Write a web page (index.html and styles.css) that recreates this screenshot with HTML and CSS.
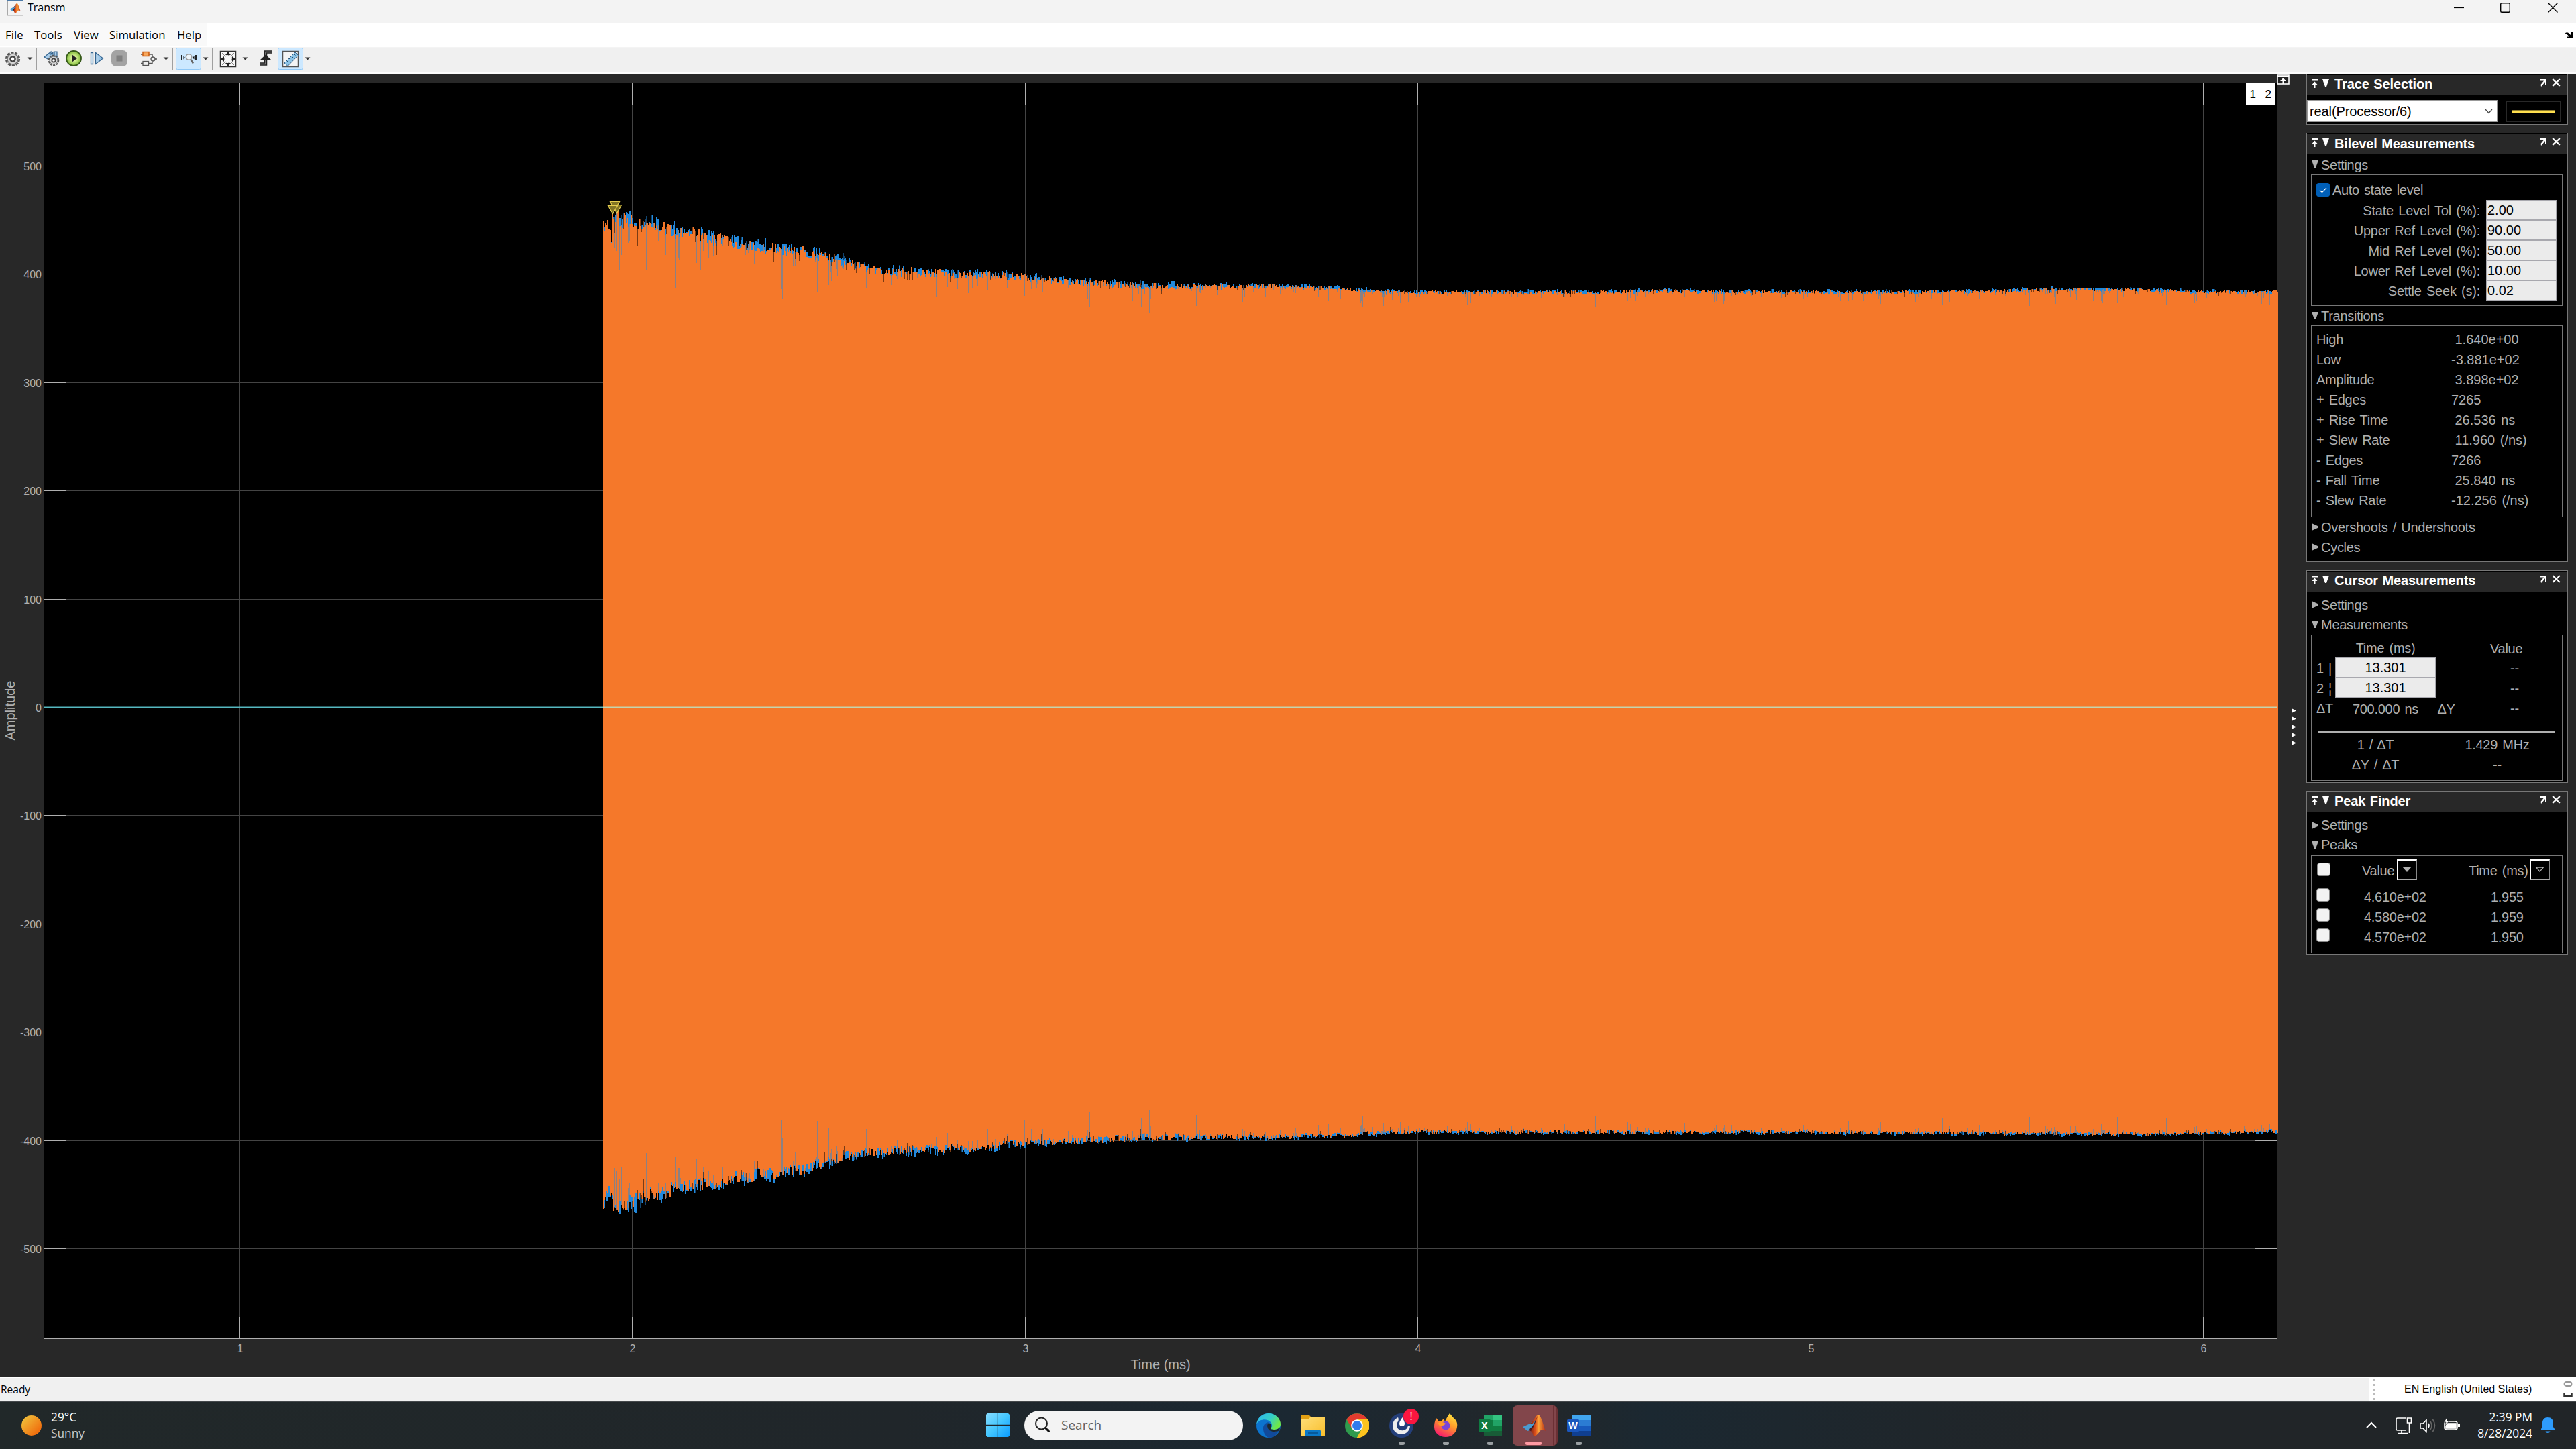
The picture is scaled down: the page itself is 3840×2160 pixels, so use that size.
FILE: index.html
```html
<!DOCTYPE html>
<html lang="en">
<head>
<meta charset="utf-8">
<title>Transm</title>
<link rel="stylesheet" href="styles.css">
</head>
<body>
<svg width="0" height="0" class="defs">
  <defs>
    <symbol id="pin" viewBox="0 0 9 13"><path d="M0 0h9v2.5H0zM4.500 3.500L8.500 8H5.500v5h-2V8H.5z" fill="#fff"/></symbol>
    <symbol id="undock" viewBox="0 0 10 11"><path d="M1 0h9v9H8V4L3.500 9.500 2 11 1.500 8 6 2.500H1z" fill="#fff"/></symbol>
    <symbol id="close" viewBox="0 0 13 12"><path d="M1.200 1l10.600 10M11.800 1L1.200 11" stroke="#fff" stroke-width="2.300"/></symbol>
    <symbol id="down" viewBox="0 0 10 11"><path d="M0 0h10L6 11H4z" fill="currentColor"/></symbol>
    <symbol id="right" viewBox="0 0 10 11"><path d="M0 0l10 4.500v2L0 11z" fill="currentColor"/></symbol>
    <linearGradient id="sun" x2="1" y2="1"><stop offset=".1" stop-color="#f0c03a"/><stop offset=".8" stop-color="#f0700f"/></linearGradient>
    <linearGradient id="win" x2="1" y2="1"><stop stop-color="#86dcff"/><stop offset=".5" stop-color="#43c6ff"/><stop offset="1" stop-color="#0a9bff"/></linearGradient>
    <linearGradient id="edgeTop" x2="1" y2=".5"><stop stop-color="#2fb4f0"/><stop offset=".6" stop-color="#35cfc5"/><stop offset="1" stop-color="#6fe847"/></linearGradient>
    <linearGradient id="fold" x2="1" y2="1"><stop stop-color="#ffe07a"/><stop offset="1" stop-color="#f9bd2b"/></linearGradient>
    <linearGradient id="fox" x1=".8" x2=".3" y2="1"><stop stop-color="#ffe93f"/><stop offset=".45" stop-color="#ff9a2a"/><stop offset="1" stop-color="#f8166e"/></linearGradient>
    <linearGradient id="matl" x2="1" y2="0"><stop stop-color="#7a1f12"/><stop offset=".35" stop-color="#e0521c"/><stop offset=".55" stop-color="#fca53a"/><stop offset="1" stop-color="#b52a14"/></linearGradient>
    <radialGradient id="play"><stop offset=".3" stop-color="#dcf59a"/><stop offset="1" stop-color="#7db935"/></radialGradient>
    <linearGradient id="step" x2="1"><stop stop-color="#e6f3fc"/><stop offset="1" stop-color="#7db3dd"/></linearGradient>
    <symbol id="matlab" viewBox="0 0 34 32">
      <path d="M0 18l11-5 5-5 3 5-8 10-4 1z" fill="#4b9bd1"/>
      <path d="M11 13C16 10 19 1 23 0c4 0 8 16 11 24-4-2-7-2-9 1-3 4-6 7-9 7-1-5-3-8-5-8 5-6 8-12 9-18l-6 8z" fill="url(#matl)"/>
      <path d="M23 0c-2 4-4 14-11 24-3-1-2-2-1-4 5-3 8-12 12-20z" fill="#4a1a20"/>
    </symbol>
    <symbol id="gear" viewBox="0 0 24 24">
      <circle cx="12" cy="12" r="9.800" fill="none" stroke="#555" stroke-width="2.600" stroke-dasharray="4.400 1.750"/>
      <circle cx="12" cy="12" r="8" fill="#d4d4d4" stroke="#666" stroke-width="1.300"/>
      <circle cx="12" cy="12" r="3.600" fill="#fff" stroke="#444" stroke-width="2.400"/>
    </symbol>
  </defs>
</svg>

<header class="titlebar">
  <svg class="app-icon" viewBox="0 0 24 24"><rect x=".5" y="-5" width="23" height="28" fill="#f3f3f3" stroke="#a9a9a9"/><path d="M0 0h24v2H0z" fill="#4c7aa8"/><use href="#matlab" x="3" y="5" width="17" height="15"/></svg>
  <span class="title">Transm</span>
  <svg class="win-buttons" viewBox="0 0 160 16"><path d="M0 8.500h15" stroke="#000" stroke-width="1.200"/><rect x="69.700" y="1.700" width="13.600" height="13.600" rx="1.500" fill="none" stroke="#000" stroke-width="1.400"/><path d="M140.500 1.500l14 14M154.500 1.500l-14 14" stroke="#000" stroke-width="1.300"/></svg>
</header>

<nav class="menubar">
  <div class="menus"><span class="m-file">File</span><span class="m-tools">Tools</span><span class="m-view">View</span><span class="m-sim">Simulation</span><span class="m-help">Help</span></div>
  <svg class="dock" viewBox="0 0 12 10"><path d="M0 3.500L2 1.500l3 0 4 3.500V1h3v9H4V7.500h3L3.500 4z" fill="#000"/></svg>
</nav>

<svg class="toolbar" width="3840" height="42" viewBox="0 68 3840 42">
  <path d="M0 68.500h3840M0 107.500h3840" stroke="#a0a0a0"/><path d="M0 69.500h3840M0 109h3840" stroke="#fff" stroke-width="1.600"/>
  <path d="M54.500 72v33M198.500 72v33M257.500 72v33M316.500 72v33M375.500 72v33" stroke="#a0a0a0"/>
  <path d="M40.500 85.500h8l-4 4zM243.500 85.500h8l-4 4zM302.500 85.500h8l-4 4zM361.500 85.500h8l-4 4zM454.500 85.500h8l-4 4z" fill="#333"/>
  <use href="#gear" x="7" y="76" width="24" height="24"/>
  <path d="M66 85l10-8v4l3-3v10l-3-2v5zM81 77h4v12h-4z" fill="#a9cdea" stroke="#356590" stroke-width="1.200"/>
  <use href="#gear" x="71" y="81" width="18" height="18"/>
  <circle cx="110" cy="87" r="11" fill="url(#play)" stroke="#375a1a" stroke-width="1.800"/><path d="M107 81l8 6-8 6z" fill="#222"/>
  <path d="M135.500 78.500h3v17h-3zM142.500 78.500l11 8.500-11 8.500z" fill="url(#step)" stroke="#356590" stroke-width="1.300"/>
  <rect x="166" y="75" width="24" height="24" rx="7" fill="#a3a3a3"/><rect x="173.500" y="82.500" width="9" height="9" fill="#808080"/>
  <path d="M210 81h4M221 81h6v5M210 94.500h4M221 94.500h6v-3M231 88h3" fill="none" stroke="#555" stroke-width="1.400"/>
  <rect x="213" y="77.500" width="9" height="6" fill="#f9a85c" stroke="#c75a10" stroke-width="1.500"/><rect x="213" y="91.500" width="8.500" height="6" fill="#eee" stroke="#555" stroke-width="1.300"/><circle cx="228" cy="88" r="3" fill="#eee" stroke="#555" stroke-width="1.300"/>
  <rect x="262.500" y="71.500" width="37" height="32" rx="2" fill="#cce8ff" stroke="#90c8f6"/>
  <path d="M271 82v8M292 82v8" stroke="#111" stroke-width="1.800"/><path d="M273.500 83.500v5l2.500-2.500zM289.500 83.500v5l-2.500-2.500z" fill="#111"/><circle cx="281.500" cy="85" r="4.200" fill="#eef6fc" stroke="#999" stroke-width="1.600"/><path d="M284.500 89l3.500 5.500" stroke="#666" stroke-width="2.400"/>
  <rect x="328.500" y="76.500" width="23" height="23" fill="#f7f7f7" stroke="#333" stroke-width="1.500"/>
  <path d="M340 77l4 5h-8zM340 99l4-5h-8zM329 88l5-4v8zM351 88l-5-4v8z" fill="#222"/><circle cx="340" cy="88" r="5.500" fill="none" stroke="#999" stroke-dasharray="3 2"/><path d="M331 79l4 4M349 79l-4 4M331 97l4-4M349 97l-4-4" stroke="#888"/>
  <path d="M387 95.500h9v-18h10" fill="none" stroke="#222" stroke-width="4.500"/><path d="M388 95.500h8v-18h9" fill="none" stroke="#999" stroke-width="1.300"/><path d="M387.500 89.500l8.500-8 8.500 8z" fill="#222"/>
  <rect x="414.500" y="71.500" width="37" height="32" rx="2" fill="#cce8ff" stroke="#90c8f6"/>
  <rect x="421.500" y="76.500" width="23" height="23" fill="#f4f4f4" stroke="#555" stroke-width="1.500"/><path d="M424 94l16-16 4.500 4.500-15.500 16z" fill="#8cc3e6" stroke="#38648a"/><path d="M427.500 90.500l2.500 2.500M431 87l2.500 2.500M434.500 83.500l2.500 2.500M438 80l2.500 2.500" stroke="#25506f"/>
</svg>

<main class="scope">
  <svg id="plot" class="plot" width="3438" height="1942" viewBox="0 110 3438 1942">
    <rect x="65" y="123" width="3330" height="1873" fill="#000"/>
    <g id="grid"></g>
    <g id="wave" shape-rendering="crispEdges"></g>
    <rect x="65.500" y="123.500" width="3329" height="1872" fill="none" stroke="#afafaf"/>
    <path d="M66 1054.500h833" stroke="#55b8c0" stroke-width="2"/><path d="M899 1054.500h2495" stroke="#c3d4ae" stroke-width="2"/>
    <g fill="#827524" stroke="#e6cf50" stroke-width="1.200"><path d="M909.500 300.500h14l-7 12z"/><path d="M912.500 305.500h14l-7 12z"/><path d="M906.500 306.500h14l-7 12z"/></g>
    <g id="labels" class="tick"></g>
    <text class="axis" x="1730" y="2041" text-anchor="middle">Time (ms)</text>
    <text class="axis" transform="translate(22 1059) rotate(-90)" text-anchor="middle">Amplitude</text>
    <path d="M3348 123h22v33h-22zM3371 123h21v33h-21z" fill="#fff"/>
    <path d="M3370.500 123v33" stroke="#222"/>
    <text class="legend" x="3353.500" y="146">1</text><text class="legend" x="3376.500" y="146">2</text>
    <rect x="3395" y="112" width="17" height="13" fill="#222" stroke="#fff" stroke-width="1.600"/><path d="M3395 114.500h17" stroke="#fff"/><path d="M3403.500 116l4.500 5h-3.500v4h-2v-4h-3.500z" fill="#fff"/>
    <path d="M3416 1056l7 3.500-7 3.500zM3416 1068l7 3.500-7 3.500zM3416 1080l7 3.500-7 3.500zM3416 1092l7 3.500-7 3.500zM3416 1104l7 3.500-7 3.500z" fill="#fff"/>
  </svg>

  <aside class="side">
    <section class="panel trace">
      <h2><svg class="i-pin"><use href="#pin"/></svg><svg class="i-tri"><use href="#down"/></svg><span>Trace Selection</span><svg class="i-un"><use href="#undock"/></svg><svg class="i-x"><use href="#close"/></svg></h2>
      <div class="trace-row"><div class="combo">real(Processor/6)<svg width="12" height="8" viewBox="0 0 12 8"><path d="M1 1l5 5.500L11 1" fill="none" stroke="#444" stroke-width="1.200"/></svg></div><div class="swatch"><i></i></div></div>
    </section>

    <section class="panel bilevel">
      <h2><svg class="i-pin"><use href="#pin"/></svg><svg class="i-tri"><use href="#down"/></svg><span>Bilevel Measurements</span><svg class="i-un"><use href="#undock"/></svg><svg class="i-x"><use href="#close"/></svg></h2>
      <div class="sec"><svg><use href="#down"/></svg>Settings</div>
      <div class="box settings">
        <div class="auto"><svg width="20" height="20" viewBox="0 0 20 20"><rect width="20" height="20" rx="3.500" fill="#005fb8"/><path d="M5 10.500l3.500 3L15 7" fill="none" stroke="#fff" stroke-width="1.200"/></svg>Auto state level</div>
        <div class="field"><span>State Level Tol (%):</span><b>2.00</b></div>
        <div class="field"><span>Upper Ref Level (%):</span><b>90.00</b></div>
        <div class="field"><span>Mid Ref Level (%):</span><b>50.00</b></div>
        <div class="field"><span>Lower Ref Level (%):</span><b>10.00</b></div>
        <div class="field"><span>Settle Seek (s):</span><b>0.02</b></div>
      </div>
      <div class="sec"><svg><use href="#down"/></svg>Transitions</div>
      <div class="box trans">
        <div class="kv"><span>High</span><span class="in">1.640e+00</span></div>
        <div class="kv"><span>Low</span><span>-3.881e+02</span></div>
        <div class="kv"><span>Amplitude</span><span class="in">3.898e+02</span></div>
        <div class="kv"><span>+ Edges</span><span>7265</span></div>
        <div class="kv"><span>+ Rise Time</span><span class="in">26.536 ns</span></div>
        <div class="kv"><span>+ Slew Rate</span><span class="in">11.960 (/ns)</span></div>
        <div class="kv"><span>- Edges</span><span>7266</span></div>
        <div class="kv"><span>- Fall Time</span><span class="in">25.840 ns</span></div>
        <div class="kv"><span>- Slew Rate</span><span>-12.256 (/ns)</span></div>
      </div>
      <div class="sec"><svg><use href="#right"/></svg>Overshoots / Undershoots</div>
      <div class="sec"><svg><use href="#right"/></svg>Cycles</div>
    </section>

    <section class="panel cursor">
      <h2><svg class="i-pin"><use href="#pin"/></svg><svg class="i-tri"><use href="#down"/></svg><span>Cursor Measurements</span><svg class="i-un"><use href="#undock"/></svg><svg class="i-x"><use href="#close"/></svg></h2>
      <div class="sec first"><svg><use href="#right"/></svg>Settings</div>
      <div class="sec"><svg><use href="#down"/></svg>Measurements</div>
      <div class="box">
        <div class="cur head"><span></span><span>Time (ms)</span><span></span><span class="vh">Value</span></div>
        <div class="cur"><span>1 |</span><b>13.301</b><span></span><span>--</span></div>
        <div class="cur"><span>2 ¦</span><b>13.301</b><span></span><span>--</span></div>
        <div class="cur"><span>ΔT</span><span class="mid">700.000 ns</span><span class="dy">ΔY</span><span>--</span></div>
        <hr>
        <div class="pair"><span>1 / ΔT</span><span>1.429 MHz</span></div>
        <div class="pair"><span>ΔY / ΔT</span><span>--</span></div>
      </div>
    </section>

    <section class="panel peak">
      <h2><svg class="i-pin"><use href="#pin"/></svg><svg class="i-tri"><use href="#down"/></svg><span>Peak Finder</span><svg class="i-un"><use href="#undock"/></svg><svg class="i-x"><use href="#close"/></svg></h2>
      <div class="sec first"><svg><use href="#right"/></svg>Settings</div>
      <div class="sec"><svg><use href="#down"/></svg>Peaks</div>
      <div class="box">
        <div class="pk pk-head"><i></i><span class="v">Value</span><em><svg width="14" height="8" viewBox="0 0 14 8"><path d="M0 0h14L7 8z" fill="#afafaf"/></svg></em><span class="t">Time (ms)</span><em><svg width="14" height="8" viewBox="0 0 14 8"><path d="M1.500 1h11L7 7.200z" fill="none" stroke="#afafaf" stroke-width="1.300"/></svg></em></div>
        <div class="pk"><i></i><span class="v">4.610e+02</span><span class="t">1.955</span></div>
        <div class="pk"><i></i><span class="v">4.580e+02</span><span class="t">1.959</span></div>
        <div class="pk"><i></i><span class="v">4.570e+02</span><span class="t">1.950</span></div>
      </div>
    </section>
  </aside>
</main>

<footer class="status">
  <span>Ready</span>
  <div class="lang"><span>EN English (United States)</span><svg width="14" height="26" viewBox="0 0 14 26"><rect x="1.500" y="2" width="11" height="6" rx="3" fill="none" stroke="#999" stroke-width="1.800"/><path d="M1.500 19v4h11v-4" fill="none" stroke="#333" stroke-width="2.500"/></svg></div>
</footer>

<div class="taskbar">
  <div class="weather"><svg width="30" height="30"><circle cx="15" cy="15" r="15" fill="url(#sun)"/></svg><div><p>29°C</p><p class="dim">Sunny</p></div></div>
  <svg class="start" width="35" height="35" viewBox="0 0 35 35" fill="url(#win)"><path d="M2 0h14.800v16.800H0V2zM18 0h15l2 2v14.800H18zM0 18h16.800v17H2l-2-2zM18 18h17v15l-2 2H18z"/></svg>
  <div class="search"><svg width="24" height="24" viewBox="0 0 24 24"><circle cx="10.500" cy="10" r="8.500" fill="none" stroke="#222" stroke-width="2"/><path d="M16.500 16.500l5 5" stroke="#111" stroke-width="3" stroke-linecap="round"/></svg>Search</div>
  <div class="apps">
    <div><svg viewBox="0 0 36 36"><circle cx="18" cy="18" r="18" fill="#0c74cf"/><path d="M0 16C2 5 10 0 18 0c11 0 18 8 18 16 0 6-5 8-10 8-3 0-5-1-5-2 3-2 3-7-1-10C15 8 5 8 0 16z" fill="url(#edgeTop)"/><path d="M10 22c0-5 3-8 8-9-4 4-3 12 6 14 4 0 7-1 9-1-3 6-8 10-15 10-5-2-8-8-8-14z" fill="#114a9b"/><path d="M18 14c-4 3-2 13 8 13 4 0 7-1 8-2l2-7c-1 4-5 6-10 6-3 0-5-1-5-2 2-2 2-6-3-8z" fill="#1d282f"/></svg></div>
    <div><svg viewBox="0 0 36 36"><path d="M0 4q0-2 2-2h10l4 4v6H0z" fill="#e2a013"/><path d="M0 8h12l3-3h20q1 0 1 1v28H0z" fill="url(#fold)"/><path d="M6 34V27q0-3 3-3h18q3 0 3 3v7z" fill="#0b78c8"/><path d="M11 29h14" stroke="#074f8d" stroke-width="1.500"/></svg></div>
    <div><svg viewBox="0 0 36 36"><circle cx="18" cy="18" r="18" fill="#2f9b4d"/><path d="M18 18L34 9A18 18 0 0 1 18 36z" fill="#fcc31e"/><path d="M10.500 22.500L18 36l7.500-13.500" fill="#2f9b4d"/><path d="M25.500 22.500L18 36A18 18 0 0 0 34 9H18z" fill="#fcc31e"/><path d="M2.500 9A18 18 0 0 1 33.500 9H18L10 22z" fill="#e23b2e"/><circle cx="18" cy="18" r="8.800" fill="#fff"/><circle cx="18" cy="18" r="7" fill="#2f7bee"/></svg></div>
    <div class="run"><svg viewBox="0 0 36 36"><circle cx="18" cy="18" r="18" fill="#243f7a"/><path d="M13 6A13 13 0 1 0 31 18h-3c-1 5-5 8-10 7-7-1-9-8-5-13 1-2 1-4 0-6z" fill="#eee"/><path d="M19.500 6c2 4 3.500 7 3.500 9a4 4 0 0 1-8 0c0-3 3-6 4.500-9z" fill="#fff"/></svg><span class="badge">!</span></div>
    <div class="run"><svg viewBox="0 0 36 36"><path d="M4 7l4 5 4-1 3-3 2 4c2-4 4-8 7-12l5 6c5 4 7 8 6 14-1 9-8 15-17 15S1 29 1 20C1 14 2 12 4 7z" fill="url(#fox)"/><circle cx="18" cy="18" r="6.500" fill="#7a45d8"/><path d="M7 14c4-2 8-1 11 1-2 3-5 3-7 4-3-1-4-3-4-5z" fill="#ff9a2a"/></svg></div>
    <div class="run"><svg viewBox="0 0 36 36"><path d="M9 2h27v8H9z" fill="#33c481"/><path d="M9 2h13.500v8H9z" fill="#21a366"/><path d="M9 10h27v8H9z" fill="#21a366"/><path d="M9 10h13.500v16H9z" fill="#107c41"/><path d="M22.500 18H36v8H22.500z" fill="#107c41"/><path d="M9 26h27v8H9z" fill="#185c37"/><rect x="1" y="9" width="18" height="18" rx="1.500" fill="#0f7b41"/><text x="10" y="23" text-anchor="middle">X</text></svg></div>
    <div class="run active"><svg viewBox="0 0 36 36"><use href="#matlab" x="1" y="2" width="34" height="32"/></svg></div>
    <div class="run"><svg viewBox="0 0 36 36"><path d="M9 2h27v8H9z" fill="#41a5ee"/><path d="M9 10h27v8H9z" fill="#2b7cd3"/><path d="M9 18h27v8H9z" fill="#185abd"/><path d="M9 26h27v8H9z" fill="#103f91"/><rect x="1" y="9" width="18" height="18" rx="1.500" fill="#1a56bd"/><text x="10" y="22.500" text-anchor="middle">W</text></svg></div>
  </div>
  <div class="tray">
    <svg width="140" height="26" viewBox="0 0 140 26" fill="none" stroke="#fff" stroke-width="1.600"><path d="M1 16l7-7 7 7" stroke-width="2"/><path d="M59 2H47q-2 0-2 2v14q0 2 2 2h13M53 20v4M48 24.500h14M61.500 2h6v7h-6zM64.500 9v15"/><path d="M81 10h4l5-5v17l-5-5h-4z"/><path d="M93 10q2 3 0 6" /><path d="M96 7q4 6 0 12M99.500 4q6 9 0 18" stroke="#666"/><rect x="117" y="7" width="19" height="12" rx="3"/><rect x="119" y="10" width="15" height="7" fill="#fff"/><path d="M137 11h3v4h-3z" fill="#fff" stroke="none"/><path d="M121 1l-5 7h3l-1 5 6-7h-3z" fill="#fff" stroke="#212629" stroke-width=".6"/></svg>
    <div class="clock"><p>2:39 PM</p><p>8/28/2024</p></div>
    <svg class="bell" width="20" height="24" viewBox="0 0 20 24"><path d="M10 0c5 0 8 3.500 8 8v6l2 3v2H0v-2l2-3V8c0-4.500 3-8 8-8zM6.500 20.500h7q-1 2.500-3.500 2.500t-3.500-2.500z" fill="#2e9bfb"/></svg>
  </div>
</div>
<script src="plot.js"></script>
</body>
</html>
```
FILE: styles.css
```css
* { box-sizing: border-box; }
body { margin: 0; width: 3840px; height: 2160px; overflow: hidden; display: flex; flex-direction: column; background: #282828; font-family: "Open Sans", "Noto Sans", sans-serif; color: #000; }
.defs { position: absolute; }
p { margin: 0; }
svg { display: block; flex: none; }

.titlebar { height: 34px; flex: none; background: #f3f3f3; display: flex; align-items: flex-start; padding-left: 11px; }
.app-icon { width: 24px; height: 24px; }
.title { font-size: 16px; line-height: 23px; margin-left: 6px; flex: 1; }
.win-buttons { width: 160px; height: 16px; margin: 3px 22px 0 0; }

.menubar { height: 34px; flex: none; background: #fff; display: flex; justify-content: space-between; }
.menus { width: 309px; background: #f9f9f9; display: flex; padding-left: 8px; font-size: 16.800px; line-height: 35px; }
.m-file { width: 43px; }
.m-tools { width: 59px; }
.m-view { width: 53px; }
.m-sim { width: 101px; }
.dock { width: 12px; height: 10px; margin: 13px 5px 0 0; }
.toolbar { background: #f0f0f0; }

.scope { height: 1942px; flex: none; display: flex; }
.plot { background: #282828; }
.tick { font: 16px "Liberation Sans", sans-serif; fill: #afafaf; }
.axis { font: 20px "Liberation Sans", sans-serif; fill: #afafaf; }
.legend { font: 17px "Liberation Sans", sans-serif; fill: #000; }

.side { width: 390px; font: 20px/30px "Liberation Sans", Arial, sans-serif; letter-spacing: -.28px; word-spacing: 2px; color: #afafaf; }
.panel { border: 1px solid #777; background: #000; padding-top: 1px; }
.trace { height: 76px; }
.bilevel { height: 640px; margin-top: 12px; }
.cursor { height: 317px; margin-top: 12px; }
.peak { height: 244px; margin-top: 12px; }
.panel h2 { margin: 0 1px 0 0; height: 30px; background: #282828; color: #fff; font-size: 20px; line-height: 27px; letter-spacing: -.1px; word-spacing: 1px; display: flex; padding-left: 7px; }
.panel h2 span { flex: 1; margin-left: 8px; }
.bilevel h2 { line-height: 28px; }
.i-pin { width: 9px; height: 13px; margin: 6px 7px 0 0; }
.i-tri { width: 10px; height: 11px; margin-top: 6px; }
.i-un { width: 10px; height: 11px; margin: 6px 8px 0 0; }
.i-x { width: 13px; height: 12px; margin: 5px 9px 0 0; }
.sec { display: flex; height: 30px; padding-left: 7px; color: #afafaf; }
.sec svg { width: 10px; height: 11px; margin: 9px 4px 0 0; }
.box { border: 1px solid #777; margin: 0 7px 0 6px; }
.panel b { font-weight: normal; background: #ebebeb; color: #000; border: 1px solid #a8a8ae; line-height: 29px; height: 30px; letter-spacing: 0; }

.trace-row { display: flex; padding-top: 7px; }
.combo { width: 284px; height: 33px; border: 1px solid #999; background: #fff; color: #000; display: flex; justify-content: space-between; align-items: center; padding: 0 6px 0 3px; letter-spacing: -.1px; }
.swatch { width: 81px; height: 31px; margin: 2px 0 0 13px; border: 1px solid #282828; display: flex; align-items: center; justify-content: center; }
.swatch i { width: 64px; height: 5px; background: #ffdf4f; border-bottom: 1px solid #8f7d2c; border-top: 1px solid #8f7d2c; }

.bilevel h2 + .sec { line-height: 32px; }
.settings { height: 196px; padding-top: 7px; }
.auto { display: flex; align-items: center; gap: 4px; padding-left: 7px; height: 30px; line-height: 34px; letter-spacing: -.35px; }
.field { display: flex; height: 30px; justify-content: flex-end; padding-right: 8px; }
.field span { line-height: 33px; margin-right: 9px; letter-spacing: -.22px; }
.field b { width: 105px; padding-left: 1px; line-height: 29px; }
.bilevel > .sec:nth-of-type(3) { height: 29px; }
.trans { height: 286px; padding-top: 5px; }
.kv { display: grid; grid-template-columns: 201px 1fr; padding-left: 7px; height: 30px; }
.kv .in { padding-left: 5.500px; }
.kv span + span { letter-spacing: 0; }

.sec.first { margin-top: 5px; }
.cursor .sec { height: 29px; }
.cursor .box { height: 218px; margin-top: 1px; padding-top: 4px; }
.cur { display: grid; grid-template-columns: 28px 150px 31px 1fr; height: 30px; padding-left: 7px; text-align: center; }
.cur.head { height: 29px; }
.cur span:first-child { text-align: left; line-height: 33px; white-space: nowrap; }
.cur span:last-child { padding-left: 67px; padding-right: 51px; white-space: nowrap; line-height: 33px; }
.cur .vh { padding-left: 50px !important; padding-right: 60px !important; line-height: 32px !important; }
.cur .mid, .cur .dy { line-height: 34px; }
.cur b { line-height: 29px; }
.cursor hr { height: 2px; border: 0; background: #afafaf; margin: 20px 11px 3px 10px; }
.pair { display: flex; height: 30px; text-align: center; }
.pair span { width: 190px; }
.pair span + span { width: 173px; }

.peak .sec { height: 29px; line-height: 29px; }
.peak .box { height: 146px; margin-top: 1px; padding-top: 5px; }
.pk { display: grid; grid-template-columns: 71px 189px 1fr; height: 30px; padding-left: 7px; line-height: 33px; }
.pk i { width: 20px; height: 20px; background: #f3f3f3; border: 1px solid #888; border-radius: 4px; margin-top: 3px; }
.pk-head { grid-template-columns: 67px 52px 107px 91px 30px; padding-left: 8px; margin-bottom: 10px; }
.pk-head i { margin-top: 5px; }
.pk-head span { white-space: nowrap; line-height: 34px; }
.pk em { width: 30px; height: 31px; border: 1px solid #aaa; border-top: 2px solid #fff; border-left: 2px solid #fff; border-right-color: #888; padding: 9px 0 0 6px; }

.status { height: 36px; flex: none; background: #f0f0f0; border-top: 1px solid #a0a0a0; box-shadow: inset 0 1px #fff; display: flex; justify-content: space-between; padding-left: 1px; font-size: 15.500px; line-height: 36px; }
.lang { width: 309px; background: #fff; margin-top: 1px; padding: 0 5px 0 53px; display: flex; justify-content: space-between; align-items: center; font: 16px "Liberation Sans", sans-serif; background-image: linear-gradient(#bbb 50%, transparent 50%); background-size: 3px 7px; background-position: 6px 2px; background-repeat: repeat-y; }

.taskbar { height: 72px; flex: none; border-top: 2px solid #44484b; background: linear-gradient(90deg, #212829 0%, #20262a 35%, #1b2832 50%, #22272a 60%, #1b2831 64%, #212528 80%, #212528 100%); display: flex; align-items: center; color: #fff; font-size: 17.300px; line-height: 24px; padding-bottom: 1px; }
.weather { width: 1470px; padding-left: 32px; display: flex; align-items: center; gap: 14px; }
.weather p { line-height: 24px; }
.weather .dim { color: #c8cacb; }
.start { margin-right: 22px; }
.search { width: 326px; height: 44px; border-radius: 22px; background: #f3f3f3; color: #606060; display: flex; align-items: center; gap: 16px; padding: 0 0 1px 15px; font-size: 19px; }
.apps { display: flex; margin-left: 5px; }
.apps div { width: 66px; height: 70px; position: relative; display: flex; align-items: center; justify-content: center; }
.apps svg { width: 36px; height: 36px; }
.apps text { font: bold 14px "Open Sans", sans-serif; fill: #fff; }
.run::after { content: ""; position: absolute; left: 28.500px; bottom: 6px; width: 9px; height: 5px; border-radius: 3px; background: #9a9fa2; }
.apps .active::before { content: ""; position: absolute; left: 1px; top: 5px; width: 60px; height: 60px; border-radius: 7px; background: #82464b; border-right: 7px double #6b3034; }
.active svg { position: relative; }
.run.active::after { left: 20px; width: 24px; background: #ff9aa3; }
.badge { position: absolute; left: 36px; top: 10px; width: 23px; height: 23px; border-radius: 50%; background: #fb1640; font: 16px/23px "Open Sans", sans-serif; text-align: center; }
.tray { margin-left: auto; display: flex; align-items: center; padding-right: 32px; }
.clock { width: 108px; text-align: right; margin-right: 13px; }
```
FILE: plot.js
```js
(function () {
  // Axis geometry: 1 ms spans 585.5 px, 100 units span 161.5 px.
  const NS = 'http://www.w3.org/2000/svg';
  const L = 66, R = 3394, T = 124, B = 1995;
  function add(parent, tag, attrs, text) {
    const el = document.createElementNS(NS, tag);
    for (const k in attrs) el.setAttribute(k, attrs[k]);
    if (text !== undefined) el.textContent = text;
    document.getElementById(parent).appendChild(el);
  }
  let faint = '', bright = '';
  for (let i = 1; i <= 6; i++) {
    const x = Math.floor(357.3 + (i - 1) * 585.5) + 0.5;
    faint += `M${x} ${T}V${B}`;
    bright += `M${x} ${T}v32M${x} ${B}v-32`;
    add('labels', 'text', { x: x + 0.5, y: 2016, 'text-anchor': 'middle' }, i);
  }
  for (let v = 500; v >= -500; v -= 100) {
    const y = Math.floor(1054.5 - v * 1.614) + 0.5;
    faint += `M${L} ${y}H${R}`;
    bright += `M${L} ${y}h33M${R} ${y}h-33`;
    add('labels', 'text', { x: 62, y: y + 6.5, 'text-anchor': 'end' }, v);
  }
  add('grid', 'path', { d: faint, stroke: '#444' });
  add('grid', 'path', { d: bright, stroke: '#afafaf' });

  // Signal envelope, sampled in screen pixels.
  const upper = [[899,338],[904,330],[908,345],[911,352],[912,318],[920,322],[943,330],[1000,343],[1060,354],[1100,361],[1200,375],[1250,386],[1300,402],[1400,407],[1500,410],[1528,413],[1600,420],[1700,425],[1800,427],[1900,426],[1980,429],[2050,434],[2100,436],[2400,435],[2480,433],[2560,435],[2900,435],[3000,433],[3060,431],[3200,432],[3280,435],[3394,435]];
  const lower = [[899,1800],[903,1775],[912,1770],[915,1805],[930,1802],[943,1792],[1000,1775],[1100,1758],[1200,1743],[1280,1720],[1340,1716],[1440,1713],[1528,1704],[1700,1697],[1900,1695],[2000,1693],[2080,1688],[2600,1688],[3000,1690],[3200,1691],[3394,1687]];
  function at(pts, x) {
    let i = 1;
    while (i < pts.length - 1 && pts[i][0] < x) i++;
    const [x0, y0] = pts[i - 1], [x1, y1] = pts[i];
    return y0 + (y1 - y0) * (x - x0) / (x1 - x0);
  }
  let seed = 20;
  const rnd = () => (seed = (seed * 16807) % 2147483647) / 2147483647;
  let blue = '', orange = '', streak = '', dark = '';
  let x = 899;
  while (x < 3395) {
    const w = rnd() < 0.4 ? 1 : 2;
    const amp = x < 1300 ? 26 - (x - 899) * 0.031 : x < 2080 ? 14 - (x - 1300) * 0.01 : 6;
    const a = at(upper, x), b = at(lower, x);
    const wob = Math.sin(x / 6.5) * amp * 0.2;
    const bt = Math.round(a + (rnd() - 0.55) * amp + wob);
    const ot = Math.round(a + (rnd() - 0.4) * amp - wob * 0.4);
    const bb = Math.round(b + (rnd() - 0.45) * amp + wob);
    const ob = Math.round(b + (rnd() - 0.6) * amp + wob * 0.4);
    blue += `M${x} ${bt}h${w}V${bb}h${-w}z`;
    orange += `M${x} ${ot}h${w}V${ob}h${-w}z`;
    if (rnd() < 0.28) {
      const s = Math.round(rnd() * rnd() * amp * 4);
      streak += `M${x} ${ot}h1v${s}h-1z`;
      streak += `M${x} ${ob}h1v${-Math.round(rnd() * s + s / 3)}h-1z`;
    }
    if (rnd() < 0.2) dark += `M${x} ${Math.min(bt, ot)}h1v${Math.round(amp * rnd())}h-1zM${x} ${Math.max(bb, ob)}h1v${-Math.round(amp * rnd())}h-1z`;
    x += w;
  }
  add('wave', 'path', { d: blue, fill: '#2289dc' });
  add('wave', 'path', { d: orange, fill: '#f5782a' });
  add('wave', 'path', { d: streak, fill: '#2289dc', opacity: 0.5 });
  add('wave', 'path', { d: dark, fill: '#000', opacity: 0.5 });
})();
```
